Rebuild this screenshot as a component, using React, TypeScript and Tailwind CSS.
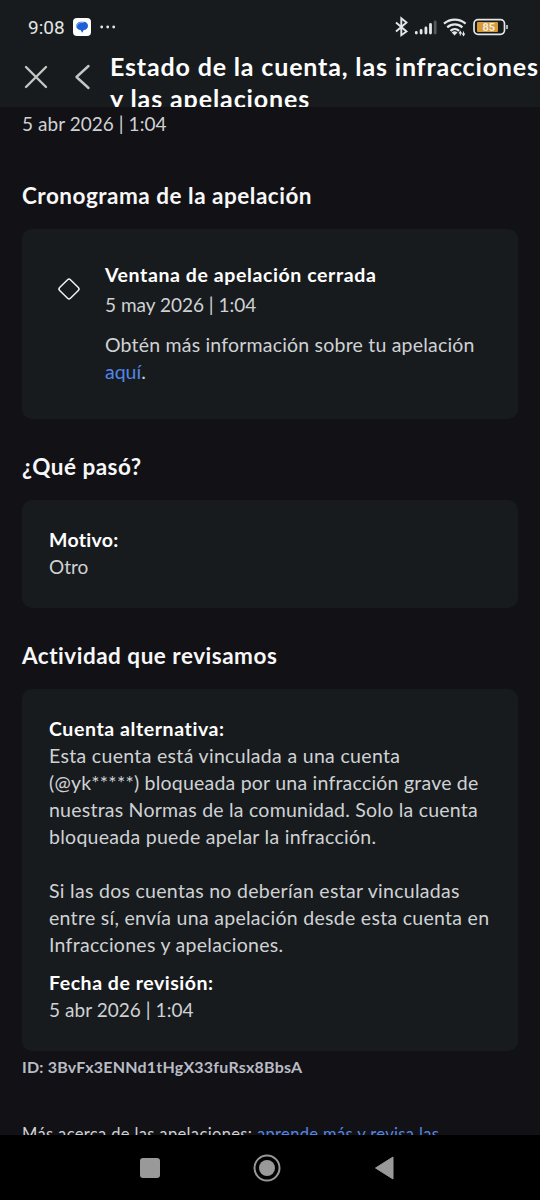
import type { ReactNode } from "react";

const REVIEW_LINES = [
  { text: "Esta cuenta está vinculada a una cuenta", className: "tracking-[0.32px]" },
  { text: "(@yk*****) bloqueada por una infracción grave de", className: "tracking-[0.22px]" },
  { text: "nuestras Normas de la comunidad. Solo la cuenta", className: "tracking-[0.23px]" },
  { text: "bloqueada puede apelar la infracción.", className: "tracking-[0.28px]" },
  { text: "", className: "" },
  { text: "Si las dos cuentas no deberían estar vinculadas", className: "tracking-[0.29px]" },
  { text: "entre sí, envía una apelación desde esta cuenta en", className: "tracking-[0.29px]" },
  { text: "Infracciones y apelaciones.", className: "tracking-[0.28px]" },
];

function StatusBar() {
  return (
    <div className="flex h-[54px] items-center pl-7 pr-[32px] text-[#e4e6e7]">
      <span className="w-[45px] font-['Roboto',sans-serif] text-[19px] leading-none">9:08</span>
      <svg width="18" height="18" viewBox="0 0 18 18">
        <rect width="18" height="18" rx="4" fill="#fff" />
        <path d="M7.500 3.700h3.300a4.200 4.200 0 0 1 0 8.400l-1.600 2.600-1.700-2.600a4.200 4.200 0 0 1 0-8.400z" fill="#1f5fd6" />
        <path d="M3.600 9.500a4.300 4.300 0 0 1 4-5h3" fill="none" stroke="#79a8f3" strokeWidth="1.200" />
      </svg>
      <svg className="ml-[9px]" width="16" height="4" viewBox="0 0 16 4" fill="currentColor">
        <circle cx="1.700" cy="2" r="1.400" />
        <circle cx="7.700" cy="2" r="1.400" />
        <circle cx="13.700" cy="2" r="1.400" />
      </svg>
      <svg className="ml-auto" width="114" height="22" viewBox="394 16 114 22" fill="none" stroke="currentColor">
        <path d="M396 22.500l10.500 9L401.300 35.200V18.200l5.200 4.300-10.500 9" strokeWidth="1.900" />
        <g strokeWidth="2.800" strokeLinecap="round">
          <path d="M416.300 33v-.5M421.100 33v-2.500M425.900 33v-5M430.500 33v-8.500" />
          <path d="M435.200 33V22" stroke="#555a5d" />
        </g>
        <path d="M444 23.600a16.500 16.500 0 0 1 21.600 0M447.200 27.300a11.500 11.500 0 0 1 15.200 0M450.500 30.800a6.500 6.500 0 0 1 8.600 0" strokeWidth="2.300" />
        <path d="M451.700 32.400a4.500 4.500 0 0 1 5.800 0l-2.900 3z" fill="currentColor" stroke="none" />
        <path d="M460.300 31.500v4M463.500 31.500v4M459 33.500l1.300-2 1.300 2M462.200 33.500l1.300 2 1.300-2" strokeWidth="1.100" />
        <rect x="474" y="19.700" width="30.500" height="14.600" rx="4" strokeWidth="1.700" />
        <rect x="477" y="22" width="21" height="10" rx="1" fill="#d89a35" stroke="none" />
        <path d="M507 25v4" strokeWidth="1.500" />
        <text x="482.500" y="31.300" fontSize="11" fontWeight="700" fontFamily="Roboto, sans-serif" fill="#f2eee6" stroke="none">85</text>
      </svg>
    </div>
  );
}

function Header() {
  return (
    <header className="h-[107px] shrink-0 overflow-hidden bg-[#171b1d]">
      <StatusBar />
      <div className="flex h-[53px] items-start">
        <svg className="ml-[24px] mt-[11px] shrink-0" width="24" height="24" viewBox="0 0 24 24" fill="none" stroke="#c3c6c5" strokeWidth="2.400" strokeLinecap="round">
          <path d="M2 2l20 20M22 2L2 22" />
        </svg>
        <svg className="ml-[26px] mt-[10px] shrink-0" width="18" height="26" viewBox="0 0 18 26" fill="none" stroke="#c3c6c5" strokeWidth="2.400" strokeLinecap="round" strokeLinejoin="round">
          <path d="M14.500 2L2.500 13l12 11" />
        </svg>
        <h1 className="-mt-[4px] ml-[18px] whitespace-nowrap text-[25px] font-bold leading-[32px] text-white">
          <span className="block tracking-[0.84px]">Estado de la cuenta, las infracciones</span>
          <span className="block tracking-[0.9px]">y las apelaciones</span>
        </h1>
      </div>
    </header>
  );
}

function Heading({ children }: { children: ReactNode }) {
  return <h2 className="mb-[19px] text-[22.5px] font-bold leading-[28px] tracking-[0.51px] text-[#f7f7f8]">{children}</h2>;
}

function Card({ children }: { children: ReactNode }) {
  return <div className="rounded-[10px] bg-[#181b1e] px-[27px] pb-[28px] pt-[26px]">{children}</div>;
}

function NavBar() {
  return (
    <nav className="flex h-[65px] shrink-0 items-center bg-black">
      <svg className="ml-[140px]" width="20" height="20" viewBox="0 0 20 20">
        <rect width="20" height="20" rx="3" fill="#999" />
      </svg>
      <svg className="ml-[93px]" width="28" height="28" viewBox="0 0 28 28">
        <circle cx="14" cy="14" r="12.500" fill="none" stroke="#999" strokeWidth="2" />
        <circle cx="14" cy="14" r="8" fill="#999" />
      </svg>
      <svg className="ml-[93px]" width="20" height="24" viewBox="0 0 20 24">
        <path d="M1.500 12L19 1v22z" fill="#999" stroke="#999" strokeLinejoin="round" />
      </svg>
    </nav>
  );
}

function App() {
  return (
    <div className="flex h-[1200px] w-[540px] flex-col overflow-hidden bg-[#121115] font-['Lato',sans-serif] text-[19px] leading-[27px] text-[#cfd2d4]">
      <Header />
      <main className="min-h-0 flex-1 overflow-hidden whitespace-nowrap px-[22px] pt-[3px]">
        <p className="mb-[45px] tracking-[0.05px]">5 abr 2026 | 1:04</p>

        <Heading>Cronograma de la apelación</Heading>
        <div className="mb-[34px] flex h-[190px] rounded-[10px] bg-[#181b1e] pl-[35px] pt-[32px]">
          <svg className="mt-[16px] shrink-0" width="24" height="24" viewBox="0 0 24 24" fill="none" stroke="#eef0f1" strokeWidth="1.500">
            <rect x="4.400" y="4.400" width="15.200" height="15.200" rx="2" transform="rotate(45 12 12)" />
          </svg>
          <div className="ml-[24px]">
            <p className="mb-[3px] text-[19.5px] font-bold tracking-[0.6px] text-white">Ventana de apelación cerrada</p>
            <p className="mb-[13px]">5 may 2026 | 1:04</p>
            <p className="text-[19.5px] tracking-[0.2px]">Obtén más información sobre tu apelación</p>
            <p className="text-[19.5px]"><span className="text-[#5286e8]">aquí</span>.</p>
          </div>
        </div>

        <Heading>¿Qué pasó?</Heading>
        <div className="mb-[34px]">
          <Card>
            <p className="text-[19.5px] font-bold tracking-[0.3px] text-white">Motivo:</p>
            <p>Otro</p>
          </Card>
        </div>

        <Heading>Actividad que revisamos</Heading>
        <Card>
          <p className="text-[19.5px] font-bold tracking-[0.59px] text-white">Cuenta alternativa:</p>
          {REVIEW_LINES.map((line, i) => (
            <p key={i} className={`h-[27px] text-[19.5px] ${line.className}`}>{line.text}</p>
          ))}
          <p className="mt-[11px] text-[19.5px] font-bold tracking-[0.54px] text-white">Fecha de revisión:</p>
          <p className="tracking-[0.05px]">5 abr 2026 | 1:04</p>
        </Card>

        <p className="mt-[5px] text-[16px] font-bold leading-[22px] tracking-[0.21px] text-[#b9bcc5]">ID: 3BvFx3ENNd1tHgX33fuRsx8BbsA</p>
        <p className="mt-[45px] text-[16.5px] leading-[22px] tracking-[0.36px]">
          Más acerca de las apelaciones: <span className="text-[#5286e8]">aprende más y revisa las</span>
        </p>
      </main>
      <NavBar />
    </div>
  );
}

export default App;
